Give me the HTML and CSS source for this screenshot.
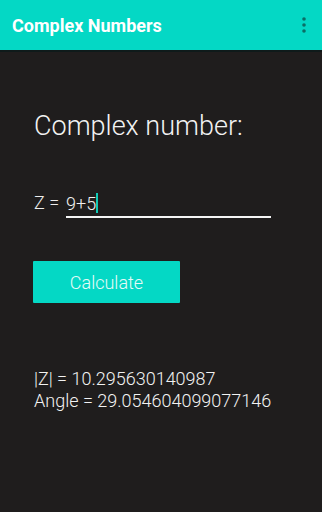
FILE: index.html
```html
<!DOCTYPE html>
<html>
<head>
<meta charset="utf-8">
<link rel="stylesheet" href="styles.css">
</head>
<body>
<div class="app">
  <header class="toolbar">
    <span class="title">Complex Numbers</span>
    <svg class="menu" width="4" height="16" viewBox="0 0 4 16">
      <circle cx="2" cy="2" r="1.8"/>
      <circle cx="2" cy="8" r="1.8"/>
      <circle cx="2" cy="14" r="1.8"/>
    </svg>
  </header>
  <div class="shadow"></div>
  <main class="content">
    <h1 class="heading">Complex number:</h1>
    <div class="input-row">
      <span class="label">Z =</span>
      <div class="field"><span class="value">9+5</span><span class="cursor"></span></div>
    </div>
    <button class="btn">Calculate</button>
    <div class="results">
      <div>|Z| = 10.295630140987</div>
      <div>Angle = 29.054604099077146</div>
    </div>
  </main>
</div>
</body>
</html>
```
FILE: styles.css
```css
html, body {
  margin: 0;
  padding: 0;
  background: #1f1d1d;
}
body {
  width: 322px;
  height: 512px;
  overflow: hidden;
  font-family: Roboto, "Liberation Sans", sans-serif;
}
.toolbar {
  height: 50px;
  background: #04d8c5;
  display: flex;
  align-items: center;
  justify-content: space-between;
  padding: 0 16px 0 12px;
}
.title {
  color: #ffffff;
  font-size: 18px;
  font-weight: 700;
}
.menu {
  fill: #0b6e66;
}
.shadow {
  height: 2px;
  background: #0f1a1a;
}
.content {
  padding: 0 34px;
}
.heading {
  margin: 58px 0 0 0;
  font-size: 27px;
  font-weight: 300;
  color: #f2f2f2;
  line-height: 32px;
}
.input-row {
  display: flex;
  align-items: flex-end;
  margin-top: 48px;
}
.label {
  color: #ededed;
  font-size: 18px;
  font-weight: 300;
  width: 32px;
  padding-bottom: 5px;
}
.field {
  width: 205px;
  border-bottom: 2px solid #f4f4f4;
  display: flex;
  align-items: center;
  height: 26px;
  padding-bottom: 0;
}
.value {
  color: #f0f0f0;
  font-size: 18px;
  font-weight: 300;
}
.cursor {
  width: 2px;
  height: 20px;
  background: #10c9b6;
}
.btn {
  display: block;
  margin-top: 43px;
  width: 147px;
  height: 42px;
  background: #04d8c5;
  border: none;
  border-radius: 1px;
  color: #e4fbf8;
  font-family: Roboto, "Liberation Sans", sans-serif;
  font-size: 18px;
  font-weight: 300;
  padding: 0;
  margin-left: -1px;
}
.results {
  margin-top: 65px;
  color: #f2f2f2;
  font-size: 18px;
  font-weight: 300;
  line-height: 22px;
}
```
